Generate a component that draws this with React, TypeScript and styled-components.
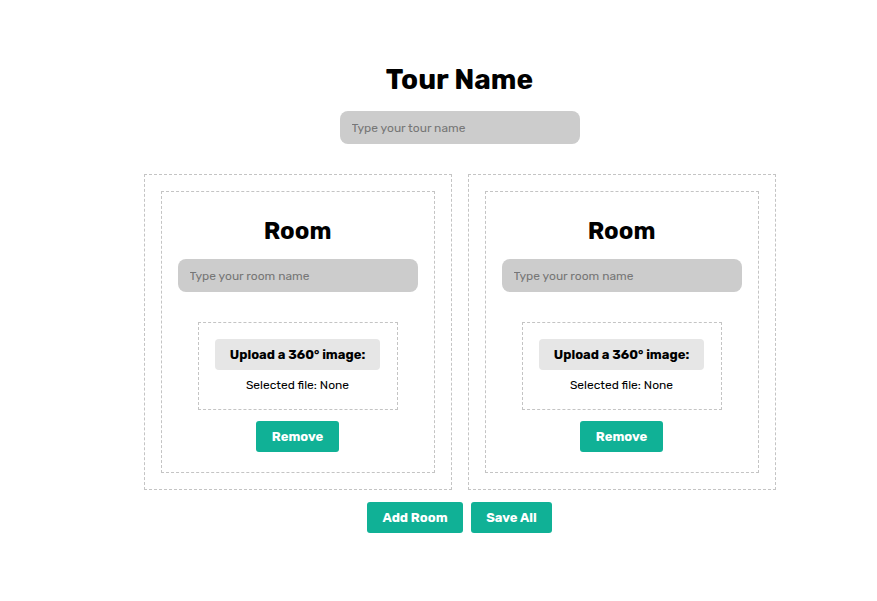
import React from "react";
import styled, { createGlobalStyle } from "styled-components";

const GlobalStyle = createGlobalStyle`
  html, body { margin: 0; padding: 0; background: #ffffff; }
  body { font-family: Rubik, Inter, "Noto Sans", sans-serif; color: #000; }
  * { box-sizing: border-box; }
`;

const Page = styled.div`
  display: flex;
  flex-direction: column;
  align-items: center;
  padding: 63px 0 40px 42px;
`;

const Title = styled.h1`
  margin: 0 0 14px;
  font-size: 28px;
  line-height: 34px;
  font-weight: 700;
`;

const TextInput = styled.input`
  width: 240px;
  height: 33px;
  border: none;
  border-radius: 8px;
  background: #cccccc;
  padding: 0 12px;
  font-family: inherit;
  font-size: 12px;
  color: #333;
  outline: none;
  &::placeholder { color: #767676; }
`;

const Rooms = styled.div`
  display: flex;
  gap: 16px;
  margin-top: 30px;
`;

const RoomOuter = styled.div`
  width: 308px;
  height: 316px;
  border: 1px dashed #c4c4c4;
  padding: 16px;
`;

const RoomInner = styled.div`
  height: 100%;
  border: 1px dashed #c4c4c4;
  padding: 16px;
  display: flex;
  flex-direction: column;
  align-items: center;
`;

const RoomTitle = styled.h2`
  margin: 9px 0 14px;
  font-size: 24px;
  line-height: 28px;
  font-weight: 700;
`;

const UploadBox = styled.div`
  margin-top: 30px;
  width: 200px;
  border: 1px dashed #c4c4c4;
  padding: 16px 16px 17px;
  display: flex;
  flex-direction: column;
  align-items: center;
`;

const UploadLabel = styled.label`
  display: flex;
  align-items: center;
  justify-content: center;
  width: 165px;
  height: 31px;
  border-radius: 4px;
  background: #e6e6e6;
  font-size: 13px;
  font-weight: 700;
  cursor: pointer;
`;

const FileText = styled.div`
  margin-top: 8px;
  font-size: 12px;
  line-height: 14px;
`;

const Button = styled.button<{ $w: number }>`
  width: ${(p) => p.$w}px;
  height: 31px;
  border: none;
  border-radius: 3px;
  background: #10b196;
  color: #ffffff;
  font-family: inherit;
  font-size: 13px;
  font-weight: 700;
  cursor: pointer;
`;

const RemoveButton = styled(Button)`
  margin-top: 11px;
`;

const Actions = styled.div`
  display: flex;
  gap: 8px;
  margin-top: 12px;
`;

const Room: React.FC = () => (
  <RoomOuter>
    <RoomInner>
      <RoomTitle>Room</RoomTitle>
      <TextInput placeholder="Type your room name" />
      <UploadBox>
        <UploadLabel>Upload a 360° image:</UploadLabel>
        <FileText>Selected file: None</FileText>
      </UploadBox>
      <RemoveButton $w={83}>Remove</RemoveButton>
    </RoomInner>
  </RoomOuter>
);

export default function App() {
  return (
    <>
      <GlobalStyle />
      <Page>
        <Title>Tour Name</Title>
        <TextInput placeholder="Type your tour name" />
        <Rooms>
          <Room />
          <Room />
        </Rooms>
        <Actions>
          <Button $w={96}>Add Room</Button>
          <Button $w={81}>Save All</Button>
        </Actions>
      </Page>
    </>
  );
}
